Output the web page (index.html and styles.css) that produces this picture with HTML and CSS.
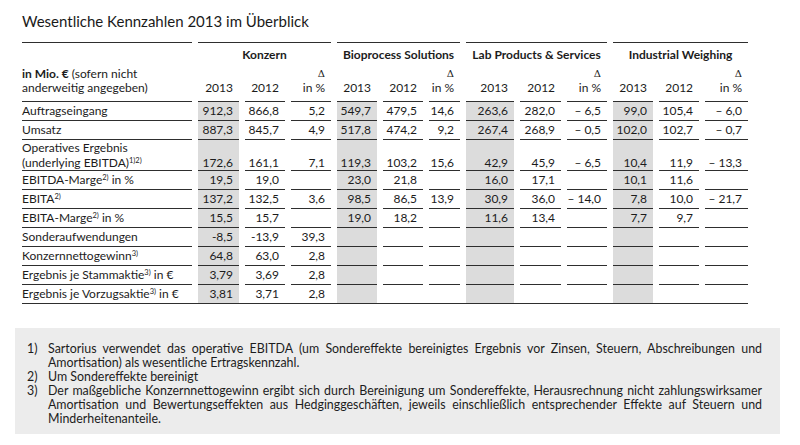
FILE: index.html
```html
<!DOCTYPE html>
<html lang="de">
<head>
<meta charset="utf-8">
<title>Wesentliche Kennzahlen 2013 im Überblick</title>
<link rel="stylesheet" href="styles.css">
</head>
<body>
<h1 class="title">Wesentliche Kennzahlen 2013 im Überblick</h1>
<div class="kpi-wrap">
<table class="kpi">
<colgroup>
<col class="c-label">
<col class="c41"><col class="c40"><col class="c40">
<col class="c40"><col class="c40"><col class="c31">
<col class="c48"><col class="c41"><col class="c40">
<col class="c40"><col class="c40"><col class="c43">
</colgroup>
<thead>
<tr class="group-row">
<th class="label-head" rowspan="2"><b>in Mio. €</b> (sofern nicht<br>anderweitig angegeben)</th>
<th class="group" colspan="3">Konzern</th>
<th class="group" colspan="3">Bioprocess Solutions</th>
<th class="group" colspan="3">Lab Products &amp; Services</th>
<th class="group" colspan="3">Industrial Weighing</th>
</tr>
<tr class="col-row">
<th>2013</th><th>2012</th><th><span class="delta">Δ</span><br>in %</th>
<th>2013</th><th>2012</th><th><span class="delta">Δ</span><br>in %</th>
<th>2013</th><th>2012</th><th><span class="delta">Δ</span><br>in %</th>
<th>2013</th><th>2012</th><th><span class="delta">Δ</span><br>in %</th>
</tr>
</thead>
<tbody>
<tr>
<td class="lbl">Auftragseingang</td>
<td class="hl">912,3</td><td>866,8</td><td>5,2</td>
<td class="hl">549,7</td><td>479,5</td><td>14,6</td>
<td class="hl">263,6</td><td>282,0</td><td>– 6,5</td>
<td class="hl">99,0</td><td>105,4</td><td>– 6,0</td>
</tr>
<tr>
<td class="lbl">Umsatz</td>
<td class="hl">887,3</td><td>845,7</td><td>4,9</td>
<td class="hl">517,8</td><td>474,2</td><td>9,2</td>
<td class="hl">267,4</td><td>268,9</td><td>– 0,5</td>
<td class="hl">102,0</td><td>102,7</td><td>– 0,7</td>
</tr>
<tr class="tall">
<td class="lbl">Operatives Ergebnis<br>(underlying EBITDA)<sup>1)2)</sup></td>
<td class="hl">172,6</td><td>161,1</td><td>7,1</td>
<td class="hl">119,3</td><td>103,2</td><td>15,6</td>
<td class="hl">42,9</td><td>45,9</td><td>– 6,5</td>
<td class="hl">10,4</td><td>11,9</td><td>– 13,3</td>
</tr>
<tr>
<td class="lbl">EBITDA-Marge<sup>2)</sup> in %</td>
<td class="hl">19,5</td><td>19,0</td><td></td>
<td class="hl">23,0</td><td>21,8</td><td></td>
<td class="hl">16,0</td><td>17,1</td><td></td>
<td class="hl">10,1</td><td>11,6</td><td></td>
</tr>
<tr>
<td class="lbl">EBITA<sup>2)</sup></td>
<td class="hl">137,2</td><td>132,5</td><td>3,6</td>
<td class="hl">98,5</td><td>86,5</td><td>13,9</td>
<td class="hl">30,9</td><td>36,0</td><td>– 14,0</td>
<td class="hl">7,8</td><td>10,0</td><td>– 21,7</td>
</tr>
<tr>
<td class="lbl">EBITA-Marge<sup>2)</sup> in %</td>
<td class="hl">15,5</td><td>15,7</td><td></td>
<td class="hl">19,0</td><td>18,2</td><td></td>
<td class="hl">11,6</td><td>13,4</td><td></td>
<td class="hl">7,7</td><td>9,7</td><td></td>
</tr>
<tr>
<td class="lbl">Sonderaufwendungen</td>
<td class="hl">-8,5</td><td>-13,9</td><td>39,3</td>
<td class="hl"></td><td></td><td></td>
<td class="hl"></td><td></td><td></td>
<td class="hl"></td><td></td><td></td>
</tr>
<tr>
<td class="lbl">Konzernnettogewinn<sup>3)</sup></td>
<td class="hl">64,8</td><td>63,0</td><td>2,8</td>
<td class="hl"></td><td></td><td></td>
<td class="hl"></td><td></td><td></td>
<td class="hl"></td><td></td><td></td>
</tr>
<tr>
<td class="lbl">Ergebnis je Stammaktie<sup>3)</sup> in €</td>
<td class="hl">3,79</td><td>3,69</td><td>2,8</td>
<td class="hl"></td><td></td><td></td>
<td class="hl"></td><td></td><td></td>
<td class="hl"></td><td></td><td></td>
</tr>
<tr class="last">
<td class="lbl">Ergebnis je Vorzugsaktie<sup>3)</sup> in €</td>
<td class="hl">3,81</td><td>3,71</td><td>2,8</td>
<td class="hl"></td><td></td><td></td>
<td class="hl"></td><td></td><td></td>
<td class="hl"></td><td></td><td></td>
</tr>
</tbody>
</table>
</div>

<div class="notes">
<div class="note"><span class="note-num">1)</span><p class="note-text">Sartorius verwendet das operative EBITDA (um Sondereffekte bereinigtes Ergebnis vor Zinsen, Steuern, Abschreibungen und Amortisation) als wesentliche Ertragskennzahl.</p></div>
<div class="note"><span class="note-num">2)</span><p class="note-text">Um Sondereffekte bereinigt</p></div>
<div class="note"><span class="note-num">3)</span><p class="note-text">Der maßgebliche Konzernnettogewinn ergibt sich durch Bereinigung um Sondereffekte, Herausrechnung nicht zahlungswirksamer Amortisation und Bewertungseffekten aus Hedginggeschäften, jeweils einschließlich entsprechender Effekte auf Steuern und Minderheitenanteile.</p></div>
</div>
</body>
</html>
```
FILE: styles.css
```css
html, body {
  margin: 0;
  padding: 0;
  background: #ffffff;
}
body {
  width: 800px;
  height: 445px;
  overflow: hidden;
  font-family: "Lato", "Open Sans", sans-serif;
  color: #1c1c1c;
}

.title {
  margin: 0 0 12px 22px;
  padding-top: 12px;
  font-size: 15px;
  line-height: 18px;
  font-weight: 400;
  color: #1a1a1a;
}

.kpi-wrap {
  width: 726px;
  margin-left: 22px;
  border-bottom: 1px solid #2e2e2e;
}

.kpi {
  table-layout: fixed;
  width: 738px;
  margin-left: -6px;
  border-collapse: separate;
  border-spacing: 6px 0;
  font-size: 12px;
}
.c-label { width: 170px; }
.c31 { width: 31px; }
.c40 { width: 40px; }
.c41 { width: 41px; }
.c43 { width: 43px; }
.c48 { width: 48px; }

.kpi th,
.kpi td {
  padding: 0 6px 0 0;
  text-align: right;
  white-space: nowrap;
}

.kpi th {
  font-weight: 400;
}

.label-head {
  border-top: 1px solid #2e2e2e;
  border-bottom: 1px solid #2e2e2e;
  vertical-align: bottom;
  line-height: 14px;
  padding-bottom: 6px !important;
}
.kpi th.label-head {
  text-align: left;
}
.label-head b {
  font-weight: 700;
}

.kpi th.group {
  border-top: 1px solid #2e2e2e;
  padding: 3px 0 0 0;
  line-height: 18px;
  font-weight: 700;
  text-align: center;
  vertical-align: top;
}

.col-row th {
  line-height: 14px;
  padding-top: 2px;
  padding-bottom: 6px;
  vertical-align: bottom;
  border-bottom: 1px solid #2e2e2e;
}

.delta {
  font-family: "DejaVu Serif", serif;
  font-size: 10px;
}

.kpi td {
  line-height: 18px;
  border-bottom: 1px solid #2e2e2e;
  vertical-align: bottom;
}
.kpi td.lbl {
  text-align: left;
}
.kpi td.hl {
  background: #dcdcdc;
}
.kpi tr.tall td {
  line-height: 15px;
}
.kpi tr.last td {
  border-bottom: none;
}

sup {
  font-size: 7.5px;
  line-height: 0;
  vertical-align: 4px;
}

.notes {
  margin: 24px 0 0 15px;
  width: 735px;
  padding: 14px 18px 8px 12px;
  background: #ececec;
  font-size: 12.4px;
  line-height: 14px;
  color: #1c1c1c;
}
.note {
  display: grid;
  grid-template-columns: 21px 1fr;
}
.note-text {
  margin: 0;
  text-align: justify;
}
```
